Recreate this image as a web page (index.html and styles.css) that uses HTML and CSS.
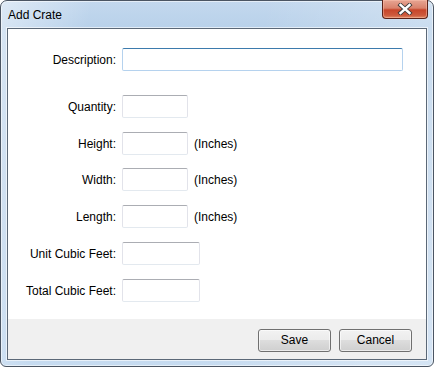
FILE: index.html
```html
<!DOCTYPE html>
<html>
<head>
<meta charset="utf-8">
<link rel="stylesheet" href="styles.css">
</head>
<body>
<div class="window">
  <div class="titlebar">
    <span class="title">Add Crate</span>
    <div class="close">
      <svg width="16" height="12" viewBox="0 0 16 12">
        <path d="M3.5 2 L12.5 10 M12.5 2 L3.5 10" stroke="#3a3a3a" stroke-width="4.2" stroke-linecap="square" fill="none"/>
        <path d="M3.5 2 L12.5 10 M12.5 2 L3.5 10" stroke="#ffffff" stroke-width="2.4" stroke-linecap="square" fill="none"/>
      </svg>
    </div>
  </div>
  <div class="client">
    <div class="form">
      <div class="row row-desc">
        <label class="lbl">Description:</label>
        <div class="input focused w-desc"></div>
      </div>
      <div class="row row-first">
        <label class="lbl">Quantity:</label>
        <div class="input w-small"></div>
      </div>
      <div class="row">
        <label class="lbl">Height:</label>
        <div class="input w-small"></div>
        <span class="unit">(Inches)</span>
      </div>
      <div class="row tight">
        <label class="lbl">Width:</label>
        <div class="input w-small"></div>
        <span class="unit">(Inches)</span>
      </div>
      <div class="row">
        <label class="lbl">Length:</label>
        <div class="input w-small"></div>
        <span class="unit">(Inches)</span>
      </div>
      <div class="row">
        <label class="lbl">Unit Cubic Feet:</label>
        <div class="input w-mid"></div>
      </div>
      <div class="row">
        <label class="lbl">Total Cubic Feet:</label>
        <div class="input w-mid"></div>
      </div>
    </div>
    <div class="footer">
      <button class="btn">Save</button>
      <button class="btn">Cancel</button>
    </div>
  </div>
</div>
</body>
</html>
```

FILE: styles.css
```css
html, body {
  margin: 0;
  padding: 0;
  width: 434px;
  height: 367px;
  overflow: hidden;
  background: #ffffff;
  font-family: "Liberation Sans", Arial, sans-serif;
  font-size: 12px;
  color: #000;
}

.window {
  box-sizing: border-box;
  width: 434px;
  height: 367px;
  border: 1px solid #4b5563;
  border-radius: 7px 7px 6px 6px;
  background:
    linear-gradient(100deg, rgba(255,255,255,0.45) 0px, rgba(255,255,255,0.0) 90px, rgba(255,255,255,0) 260px, rgba(255,255,255,0.25) 420px),
    linear-gradient(to bottom, #c3d8ee 0px, #b8d1ea 28px, #bfd5ec 200px, #c6dbf0 366px);
  display: flex;
  flex-direction: column;
  box-shadow: inset 0 0 0 1px rgba(255,255,255,0.55);
}

.titlebar {
  height: 27px;
  flex: none;
  display: flex;
  align-items: flex-start;
  justify-content: space-between;
  position: relative;
}

.title {
  margin-left: 7px;
  margin-top: 7px;
  font-size: 12px;
  line-height: 14px;
  color: #000;
}

.close {
  box-sizing: border-box;
  width: 46px;
  height: 19px;
  margin-right: 5px;
  margin-top: -1px;
  border: 1px solid #5a2219;
  border-top: none;
  border-radius: 0 0 4px 4px;
  background: linear-gradient(to bottom, #e7a593 0%, #d9826c 45%, #c7452a 55%, #cd5a3d 85%, #e08a66 100%);
  box-shadow: inset 0 0 0 1px rgba(255,200,180,0.45);
  display: flex;
  align-items: center;
  justify-content: center;
}

.close svg {
  display: block;
}

.client {
  box-sizing: border-box;
  margin: 0 6px 6px 6px;
  flex: 1;
  border: 1px solid #5b6877;
  box-shadow: 0 0 0 1px rgba(255,255,255,0.6);
  background: #ffffff;
  display: flex;
  flex-direction: column;
}

.form {
  flex: 1;
  padding-top: 19px;
  display: flex;
  flex-direction: column;
}

.row {
  display: flex;
  align-items: center;
  height: 23px;
  margin-top: 14px;
}

.row-desc {
  margin-top: 0;
}

.row-first {
  margin-top: 24px;
}

.row.tight {
  margin-top: 13px;
}

.lbl {
  width: 108px;
  text-align: right;
  margin-right: 6px;
  white-space: nowrap;
  flex: none;
}

.input {
  box-sizing: border-box;
  height: 23px;
  flex: none;
  background: #fff;
  border: 1px solid #e2e3ea;
  border-top-color: #abadb3;
  border-bottom-color: #e3e9ef;
  border-radius: 2px;
}

.input.focused {
  border-color: #b5d2ee;
  border-top-color: #3d7bad;
}

.w-desc { width: 281px; }
.w-small { width: 66px; }
.w-mid { width: 78px; }

.unit {
  margin-left: 6px;
}

.footer {
  flex: none;
  height: 40px;
  box-sizing: border-box;
  background: #f0f0f0;
  display: flex;
  justify-content: flex-end;
  align-items: flex-start;
  padding-top: 10px;
  padding-right: 14px;
  gap: 8px;
}

.btn {
  box-sizing: border-box;
  width: 73px;
  height: 23px;
  border: 1px solid #707070;
  border-radius: 3px;
  background: linear-gradient(to bottom, #f2f2f2 0%, #ebebeb 50%, #dddddd 50%, #cfcfcf 100%);
  box-shadow: inset 0 0 0 1px rgba(255,255,255,0.6);
  font-family: "Liberation Sans", Arial, sans-serif;
  font-size: 12px;
  color: #000;
  padding: 0;
  line-height: 21px;
}
```
